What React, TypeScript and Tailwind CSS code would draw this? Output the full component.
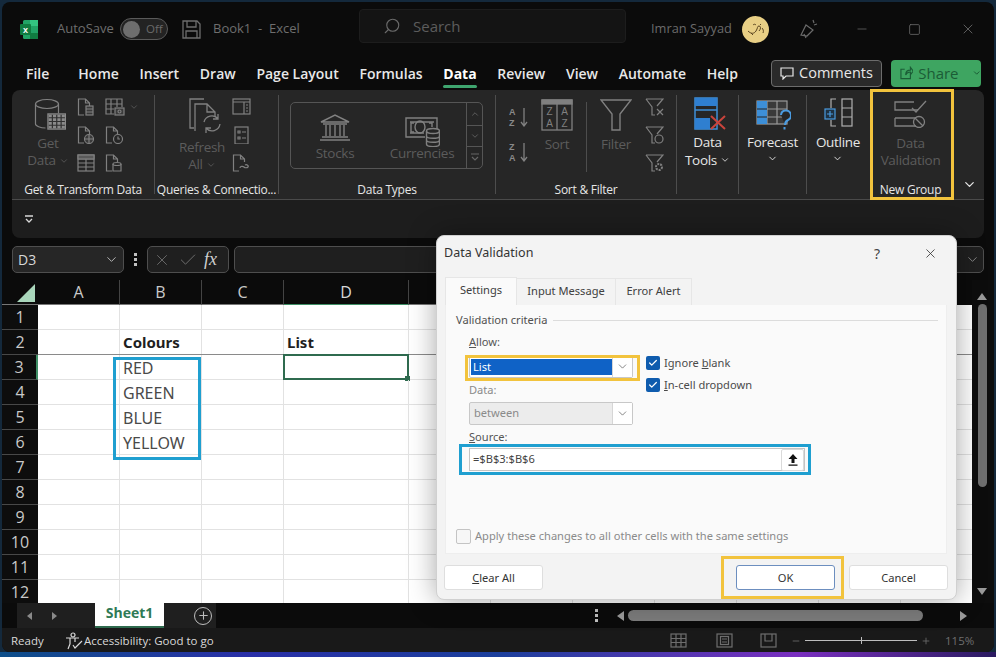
import React from "react";
import { ChevronDown, ChevronUp, X, Check, Search, Minus, Plus, Square } from "lucide-react";

const D = "#808080";
const Doc = ({ children, w = 18, h = 18 }: { children?: React.ReactNode; w?: number; h?: number }) => (
  <svg width={w} height={h} viewBox="0 0 18 18" fill="none" stroke={D} strokeWidth="1.200">
    <path d="M7 17H1.500V1h7l4 4v3M8.500 1v4h4" />
    {children}
  </svg>
);
const TableIcon = ({ x, y, w, h, c = 3, r = 3, color = D }: { x: number; y: number; w: number; h: number; c?: number; r?: number; color?: string }) => {
  const v = Array.from({ length: c - 1 }, (_, i) => x + ((i + 1) * w) / c);
  const hz = Array.from({ length: r - 1 }, (_, i) => y + ((i + 1) * h) / r);
  return (
    <g stroke={color} fill="none">
      <rect x={x} y={y} width={w} height={h} />
      {v.map((p) => <path key={p} d={`M${p} ${y}v${h}`} />)}
      {hz.map((p) => <path key={p} d={`M${x} ${p}h${w}`} />)}
    </g>
  );
};
const GetDataIcon = () => (
  <svg width="32" height="32" viewBox="0 0 32 32" fill="none" stroke={D} strokeWidth="1.200">
    <ellipse cx="13" cy="6" rx="11.500" ry="4.500" />
    <path d="M1.500 6v20c0 2 5 4 10 4M24.500 6v10" />
    <rect x="14" y="16" width="17.500" height="15" fill="#8a8a8a" />
    <TableIcon x={14} y={16} w={17.5} h={15} c={4} r={4} color="#303030" />
    <rect x="14" y="16" width="17.500" height="15" stroke="#8a8a8a" />
  </svg>
);
const RefreshIcon = () => (
  <svg width="33" height="36" viewBox="0 0 33 36" fill="none" stroke={D} strokeWidth="1.300">
    <path d="M5 30H1V1h14M6 33V6h12l8 8v5M18 6v8h8" />
    <path d="M15 24a8 8 0 0 1 14-3M31 26a8 8 0 0 1-14 4M29 16v5h-5M17 35v-5h5" />
  </svg>
);
const StocksIcon = () => (
  <svg width="32" height="28" viewBox="0 0 32 28" fill="none" stroke={D} strokeWidth="1.400">
    <path d="M2 9 16 2l14 7zM4 11h24M3 24h26M1 27h30M7 12v11M11 12v11M16 12v11M21 12v11M25 12v11" />
  </svg>
);
const CurrencyIcon = () => (
  <svg width="35" height="31" viewBox="0 0 35 31" fill="none" stroke={D} strokeWidth="1.400">
    <path d="M20 21H1V2h31v12M5 6h24M5 17h14" />
    <path d="M9 7H6v9h3M24 7h3v4" />
    <ellipse cx="15" cy="11" rx="5" ry="6" />
    <ellipse cx="28" cy="15" rx="6.500" ry="2.500" fill="#262626" />
    <path d="M21.500 15v13c0 3.500 13 3.500 13 0V15M21.500 20c0 3 13 3 13 0M21.500 24c0 3 13 3 13 0" />
  </svg>
);
const SortAZ = ({ flip = false }: { flip?: boolean }) => (
  <div className="h-[22px] w-[19px] flex">
    <div className="flex flex-col w-[11px] text-[9px] leading-[11px] font-bold font-['Liberation_Sans',sans-serif] text-[#8a8a8a]">
      <span>{flip ? "Z" : "A"}</span>
      <span>{flip ? "A" : "Z"}</span>
    </div>
    <svg width="8" height="20" viewBox="0 0 8 20" fill="none" stroke={D} strokeWidth="1.300"><path d="M4 1v18M1 15l3 4 3-4" /></svg>
  </div>
);
const SortIcon = () => (
  <svg width="32" height="32" viewBox="0 0 32 32" fill="none" stroke={D} strokeWidth="1.300">
    <rect x="1" y="1" width="30" height="30" />
    <rect x="1" y="1" width="30" height="4" fill={D} />
    <path d="M16 5v26" />
    <text x="8.500" y="16" fontSize="10" textAnchor="middle" fill={D} stroke="none" fontFamily="Liberation Sans">Z</text>
    <text x="8.500" y="28" fontSize="10" textAnchor="middle" fill={D} stroke="none" fontFamily="Liberation Sans">A</text>
    <text x="23.500" y="16" fontSize="10" textAnchor="middle" fill={D} stroke="none" fontFamily="Liberation Sans">A</text>
    <text x="23.500" y="28" fontSize="10" textAnchor="middle" fill={D} stroke="none" fontFamily="Liberation Sans">Z</text>
  </svg>
);
const FunnelIcon = () => (
  <svg width="32" height="32" viewBox="0 0 32 32" fill="none" stroke={D} strokeWidth="1.400">
    <path d="M1 1h30L20 15v16h-8V15z" />
  </svg>
);
const SmallFunnel = ({ children }: { children?: React.ReactNode }) => (
  <svg width="19" height="18" viewBox="0 0 19 18" fill="none" stroke={D} strokeWidth="1.200">
    <path d="M1 1h17l-6 7M1 1l6 8v8h3" />
    {children}
  </svg>
);
const DataToolsIcon = () => (
  <svg width="33" height="33" viewBox="0 0 33 33" fill="none">
    <rect x="1" y="1" width="22" height="31" fill="#262626" stroke="#3f8fd6" strokeWidth="1.500" />
    <rect x="1" y="1" width="22" height="8" fill="#2f7fd0" />
    <path d="M1 13h22" stroke="#3f8fd6" strokeWidth="1.500" />
    <rect x="1" y="21" width="15" height="11" fill="#2f7fd0" />
    <path d="M17 19l14 13M31 19 17 32" stroke="#c9443c" strokeWidth="2" />
  </svg>
);
const ForecastIcon = () => (
  <svg width="35" height="30" viewBox="0 0 35 30" fill="none">
    <rect x="1" y="1" width="30" height="23" stroke="#9a9a9a" strokeWidth="1.200" fill="#3a3a3a" />
    <path d="M11 1v23M21 1v23M1 9h30M1 17h30" stroke="#9a9a9a" strokeWidth="1.200" />
    <rect x="1" y="1" width="10" height="23" fill="#3d8fd8" />
    <path d="M1 9h10M1 17h10" stroke="#262626" strokeWidth="1.200" />
    <path d="M25 15a5 5 0 1 1 7 5c-2 1-3 3-3 5M28.500 27v2.500" stroke="#4a9be0" strokeWidth="2" fill="#262626" />
  </svg>
);
const OutlineIcon = () => (
  <svg width="29" height="29" viewBox="0 0 29 29" fill="none" stroke="#b0b0b0" strokeWidth="1.200">
    <rect x="1" y="11" width="10" height="10" stroke="#4a9be0" fill="#1f3344" />
    <path d="M6 13v6M3 16h6" stroke="#4a9be0" />
    <path d="M12 1H7v9M7 22v6h5" />
    <rect x="18" y="1" width="10" height="27" />
    <path d="M18 10h10M18 19h10" />
  </svg>
);
const ValidationIcon = () => (
  <svg width="33" height="28" viewBox="0 0 33 28" fill="none" stroke={D} strokeWidth="1.300">
    <path d="M24 10H1V2h19M1 18h21M1 18v8h21" />
    <path d="M18 8l4 4 10-11" />
    <circle cx="25" cy="22" r="5.500" />
    <path d="M21 18l8 8" />
  </svg>
);
const Big = ({ icon, lines, dim = false, cls = "" }: { icon: React.ReactNode; lines: React.ReactNode[]; dim?: boolean; cls?: string }) => (
  <div className={`flex flex-col items-center ${cls}`}>
    {icon}
    <div className={`flex flex-col items-center text-[13.5px] tracking-[-0.3px] ${dim ? "text-[#5c5c5c]" : "text-[#e6e6e6]"}`}>
      {lines.map((l, i) => <div key={i} className={`flex items-center whitespace-nowrap ${dim ? "h-[17px]" : "h-[18px]"}`}>{l}</div>)}
    </div>
  </div>
);
const Group = ({ w, label, children, cls = "" }: { w: number; label: string; children: React.ReactNode; cls?: string }) => (
  <div className="flex flex-col h-full shrink-0" style={{ width: w }}>
    <div className={`h-[91px] flex ${cls}`}>{children}</div>
    <div className="h-[18px] flex items-center justify-center text-[12px] tracking-[-0.25px] text-[#e6e6e6] whitespace-nowrap">{label}</div>
  </div>
);
const Sep = () => <div className="w-px my-[5px] bg-[#4d4d4d] shrink-0" />;
const Chev = ({ c = "#5c5c5c", s = 10 }: { c?: string; s?: number }) => <ChevronDown size={s} color={c} strokeWidth={2} className="ml-[3px]" />;
const DimLabel = ({ children, cls = "" }: { children: React.ReactNode; cls?: string }) => (
  <span className={`text-[13.5px] tracking-[-0.3px] text-[#5c5c5c] leading-[18px] whitespace-nowrap ${cls}`}>{children}</span>
);

const Ribbon = () => (
  <div className="mx-[10px] h-[110px] shrink-0 bg-[#262626] rounded-t-[8px] border-b border-[#4a4a4a] flex">
    <Group w={142} label="Get & Transform Data">
      <div className="ml-[15px] w-[42px] pt-[8px]">
        <Big cls="w-full" dim icon={<div className="h-[37px] ml-[4px]"><GetDataIcon /></div>} lines={["Get", <>Data<Chev /></>]} />
      </div>
      <div className="ml-[8px] mt-[8px] grid grid-cols-[18px_18px] gap-[10px] h-fit">
        <Doc><rect x="9" y="8" width="7" height="9" fill="#3a3a3a" /><path d="M9 11h7M9 14h7" /></Doc>
        <svg width="20" height="18" viewBox="0 0 20 18" fill="none" stroke={D} strokeWidth="1.200"><path d="M9 16H1V1h16v8M1 6h16M1 11h8M6 1v15M12 1v8" /><rect x="10" y="10" width="9" height="7" fill="#3a3a3a" /><circle cx="14.500" cy="13.500" r="1.500" /></svg>
        <Doc><circle cx="12" cy="13" r="4.500" fill="#3a3a3a" /><path d="M7.500 13h9M12 8.500v9" /></Doc>
        <Doc><circle cx="13" cy="13" r="4.500" fill="#262626" /><path d="M13 10.500V13h2" /></Doc>
        <svg width="18" height="18" viewBox="0 0 18 18" fill="none" stroke={D} strokeWidth="1.200"><rect x="1" y="1" width="16" height="16" /><path d="M1 5h16M1 9h16M1 13h16M9 5v12" /><rect x="1" y="1" width="16" height="4" fill="#5a5a5a" /></svg>
        <Doc><ellipse cx="12" cy="10" rx="4" ry="1.500" fill="#262626" /><path d="M8 10v7h8v-7" /></Doc>
      </div>
      <ChevronDown size={10} color="#5c5c5c" strokeWidth={2} className="ml-[6px] mt-[12px]" />
    </Group>
    <Sep />
    <Group w={123} label="Queries & Connectio...">
      <div className="ml-[21px] w-[52px] pt-[8px]">
        <Big cls="w-full" dim icon={<div className="ml-[6px] h-[41px]"><RefreshIcon /></div>} lines={["Refresh", <>All<Chev /></>]} />
      </div>
      <div className="ml-[4px] mt-[8px] flex flex-col gap-[10px]">
        <svg width="19" height="18" viewBox="0 0 19 18" fill="none" stroke={D} strokeWidth="1.200"><rect x="1" y="1" width="17" height="15" /><path d="M1 4h17M12 4v12M14 7h2M14 10h2M14 13h2" /></svg>
        <svg width="19" height="18" viewBox="0 0 19 18" fill="none" stroke={D} strokeWidth="1.200"><rect x="3" y="1" width="13" height="17" /><path d="M6 5h2v2H6zM10 6h4M6 11h2v2H6zM10 12h4" /></svg>
        <Doc><path d="M8 14c0-2 3-2 4-1s3 1 4 0-1-3-3-2" /></Doc>
      </div>
    </Group>
    <Sep />
    <Group w={216} label="Data Types">
      <div className="ml-[11px] mt-[12px] w-[193px] h-[67px] rounded-[5px] border border-[#555] flex">
        <div className="flex-1 flex">
          <div className="ml-[9px] w-[70px] flex flex-col items-center pt-[10px]">
            <StocksIcon />
            <DimLabel cls="mt-[3px]">Stocks</DimLabel>
          </div>
          <div className="ml-[21px] w-[62px] flex flex-col items-center pt-[13px]">
            <CurrencyIcon />
            <DimLabel cls="mt-[-3px]">Currencies</DimLabel>
          </div>
        </div>
        <div className="w-[16px] border-l border-[#555] flex flex-col">
          <div className="h-[23px] border-b border-[#555] flex items-center justify-center"><ChevronUp size={10} color="#666" strokeWidth={2} /></div>
          <div className="h-[21px] border-b border-[#555] flex items-center justify-center"><ChevronDown size={10} color="#666" strokeWidth={2} /></div>
          <div className="flex-1 flex flex-col items-center justify-center">
            <svg width="10" height="9" viewBox="0 0 10 9" fill="none" stroke="#666" strokeWidth="1.200"><path d="M1 1h8M2 4l3 3 3-3" /></svg>
          </div>
        </div>
      </div>
    </Group>
    <Sep />
    <Group w={180} label="Sort & Filter">
      <div className="ml-[13px] pt-[17px] flex flex-col gap-[13px] w-[19px]">
        <SortAZ />
        <SortAZ flip />
      </div>
      <div className="ml-[13px] w-[32px] pt-[9px] flex flex-col items-center">
        <SortIcon />
        <DimLabel cls="mt-[4px]">Sort</DimLabel>
      </div>
      <div className="ml-[13px] mt-[12px] w-px h-[70px] bg-[#4d4d4d]" />
      <div className="ml-[13px] w-[32px] pt-[9px] flex flex-col items-center">
        <FunnelIcon />
        <DimLabel cls="mt-[4px]">Filter</DimLabel>
      </div>
      <div className="ml-[13px] mt-[8px] flex flex-col gap-[10px]">
        <SmallFunnel><path d="M12 11l6 6M18 11l-6 6" /></SmallFunnel>
        <SmallFunnel><circle cx="14" cy="13" r="4" /></SmallFunnel>
        <SmallFunnel><circle cx="14" cy="13" r="3" strokeDasharray="2 1" strokeWidth="2" /></SmallFunnel>
      </div>
    </Group>
    <Sep />
    <Group w={61} label="">
      <Big cls="w-full pt-[7px]" icon={<div className="h-[36px] ml-[6px]"><DataToolsIcon /></div>} lines={["Data", <>Tools<Chev c="#e6e6e6" /></>]} />
    </Group>
    <Sep />
    <Group w={67} label="">
      <Big cls="w-full pt-[10px]" icon={<div className="h-[33px] ml-[2px]"><ForecastIcon /></div>} lines={["Forecast", <ChevronDown size={11} color="#e6e6e6" strokeWidth={2} className="-mt-[3px]" />]} />
    </Group>
    <Sep />
    <Group w={62} label="">
      <Big cls="w-full pt-[8px]" icon={<div className="h-[35px]"><OutlineIcon /></div>} lines={["Outline", <ChevronDown size={11} color="#e6e6e6" strokeWidth={2} className="-mt-[3px]" />]} />
    </Group>
    <Group w={83} label="New Group">
      <div className="w-full pt-[10px] flex flex-col items-center">
        <div className="h-[35px]"><ValidationIcon /></div>
        <div className="text-[13.5px] tracking-[-0.3px] leading-[17px] text-[#5c5c5c] text-center">Data<br />Validation</div>
      </div>
    </Group>
    <div className="flex-1 flex items-end justify-center pb-[7px] pl-[2px]">
      <ChevronDown size={15} color="#e6e6e6" strokeWidth={2} />
    </div>
  </div>
);

const COLS = [82, 82, 82, 125, 82, 82, 82, 82, 82, 82];
const cellText: Record<string, { t: string; bold?: boolean }> = {
  "2-1": { t: "Colours", bold: true },
  "2-3": { t: "List", bold: true },
  "3-1": { t: "RED" },
  "4-1": { t: "GREEN" },
  "5-1": { t: "BLUE" },
  "6-1": { t: "YELLOW" },
};

const Grid = () => (
  <div className="w-[970px] shrink-0 h-[323px] overflow-hidden bg-white">
    <div className="flex h-[25px] bg-[#0b0b0b]">
      <div className="w-[36px] shrink-0 flex items-end justify-end pr-[3px] pb-[2px] border-b border-[#777]">
        <div className="w-0 h-0 border-l-[18px] border-l-transparent border-b-[18px] border-b-[#a9d6bb]" />
      </div>
      {["A", "B", "C", "D", "E"].map((c, i) => (
        <div key={c} style={{ width: COLS[i] }} className={`shrink-0 flex items-center justify-center text-[16px] text-[#c9c9c9] border-r border-[#444] border-b ${c === "D" ? "border-b-[#3f8f66] text-[#d8d8d8]" : "border-b-[#777]"}`}>{c}</div>
      ))}
    </div>
    {Array.from({ length: 12 }, (_, i) => i + 1).map((r) => (
      <div key={r} className={`flex h-[25px] ${r === 2 ? "border-b border-[#8a8a8a]" : "border-b border-[#e2e2e2]"}`}>
        <div className={`w-[36px] shrink-0 bg-[#0d0d0d] flex items-center justify-center text-[16px] text-[#c9c9c9] border-b border-[#484848] -mb-px ${r === 3 ? "border-r-2 border-r-[#3f8f66]" : ""}`}>{r}</div>
        {COLS.map((w, c) => {
          const cell = cellText[`${r}-${c}`];
          return (
            <div key={c} style={{ width: w }} className={`shrink-0 relative border-r border-[#e2e2e2] pl-[3px] pt-[1px] flex items-center whitespace-nowrap font-['Noto_Sans',sans-serif] ${cell?.bold ? "text-[15px] font-bold text-[#1f1f1f]" : "text-[16px] text-[#4a4a4a]"}`}>
              {cell?.t}
              {r === 3 && c === 3 && (
                <div className="absolute -left-px -top-px -right-px -bottom-px border-2 border-[#2f6b4f]">
                  <div className="absolute -right-[3px] -bottom-[3px] w-[5px] h-[5px] bg-[#2f6b4f]" />
                </div>
              )}
            </div>
          );
        })}
      </div>
    ))}
  </div>
);

const Combo = ({ children, cls = "" }: { children: React.ReactNode; cls?: string }) => (
  <div className={`h-[23px] w-[164px] border border-[#c8c8c8] flex rounded-[2px] ${cls}`}>
    <div className="flex-1 flex items-center pl-[1px] min-w-0">{children}</div>
    <div className="w-[20px] bg-white border-l border-[#d6d6d6] flex items-center justify-center"><ChevronDown size={13} color="#555" strokeWidth={1.300} /></div>
  </div>
);
const CheckBox = ({ label }: { label: React.ReactNode }) => (
  <div className="flex items-center h-[14px] gap-[4px]">
    <div className="w-[14px] h-[14px] rounded-[2px] bg-[#0f5cae] flex items-center justify-center"><Check size={10} color="#fff" strokeWidth={3} /></div>
    <span className="text-[#4a4a4a] whitespace-nowrap">{label}</span>
  </div>
);
const DBtn = ({ children, ok = false, cls = "" }: { children: React.ReactNode; ok?: boolean; cls?: string }) => (
  <div className={`w-[99px] h-[25px] rounded-[3px] bg-white border flex items-center justify-center pt-[1px] text-[#333] ${ok ? "border-[#6c8ebf]" : "border-[#dedede]"} ${cls}`}>{children}</div>
);

const Dialog = () => (
  <div className="absolute left-[436px] top-[235px] w-[521px] h-[365px] rounded-[8px] bg-[#f3f3f3] border border-[#d0d0d0] shadow-[0_0_28px_rgba(0,0,0,0.35)] flex flex-col text-[11.1px] text-[#404040] font-['Noto_Sans',sans-serif]">
    <div className="h-[41px] flex items-center pl-[7px] pb-[7px] shrink-0">
      <span className="text-[12.5px] text-[#333]">Data Validation</span>
      <span className="ml-auto text-[14px] text-[#444]">?</span>
      <X size={15} color="#333" strokeWidth={1.300} className="ml-[43px] mr-[18px]" />
    </div>
    <div className="h-[28px] pl-[8px] flex shrink-0 items-end">
      <div className="w-[72px] h-[28px] bg-[#fafafa] border border-b-0 border-[#e6e6e6] flex items-center justify-center pb-[3px] text-[#404040]">Settings</div>
      <div className="w-[99px] h-[27px] bg-[#f3f3f3] border-r border-t border-[#e6e6e6] flex items-center justify-center pb-[1px]">Input Message</div>
      <div className="w-[76px] h-[27px] bg-[#f3f3f3] border-r border-t border-[#e6e6e6] flex items-center justify-center pb-[1px]">Error Alert</div>
    </div>
    <div className="ml-[8px] mr-[9px] h-[249px] bg-[#fafafa] border border-t-0 border-[#eeeeee] pl-[10px] pr-[8px] pt-[8px] shrink-0">
      <div className="h-[14px] flex items-center gap-[6px]">
        <span className="whitespace-nowrap text-[#505050]">Validation criteria</span>
        <div className="flex-1 h-px bg-[#dcdcdc]" />
      </div>
      <div className="ml-[13px] flex">
        <div className="w-[164px]">
          <div className="mt-[8px] h-[14px] flex items-center text-[#555]"><span><u>A</u>llow:</span></div>
          <Combo cls="mt-[6px] bg-white">
            <div className="w-full h-[16px] bg-[#0f62c6] text-white leading-[16px] pl-[2px]">List</div>
          </Combo>
          <div className="mt-[5px] h-[14px] flex items-center text-[#8a8a8a]">Data:</div>
          <Combo cls="mt-[5px] bg-[#ececec]">
            <span className="text-[#8a8a8a] pl-[3px]">between</span>
          </Combo>
        </div>
        <div className="ml-[13px] pt-[29px] flex flex-col gap-[8px]">
          <CheckBox label={<>Ignore <u>b</u>lank</>} />
          <CheckBox label={<><u>I</u>n-cell dropdown</>} />
        </div>
      </div>
      <div className="ml-[13px] mt-[5px] h-[14px] flex items-center text-[#555]"><span><u>S</u>ource:</span></div>
      <div className="ml-[13px] mt-[4px] w-[336px] h-[23px] bg-white border border-[#c4c4c4] flex items-center justify-between pl-[3px]">
        <span className="text-[#444]">=$B$3:$B$6</span>
        <div className="w-[23px] h-[22px] border border-[#dadada] rounded-[2px] flex items-center justify-center">
          <svg width="12" height="13" viewBox="0 0 12 13" fill="#111"><path d="M6 1 1.500 6H4.500v4h3V6h3zM1.500 11.500h9v1.200h-9z" /></svg>
        </div>
      </div>
      <div className="mt-[57px] flex items-center gap-[4px]">
        <div className="w-[15px] h-[15px] border border-[#c4c4c4] rounded-[2px] bg-[#f7f7f7]" />
        <span className="text-[#8a8a8a] whitespace-nowrap">Apply these changes to all other cells with the same settings</span>
      </div>
    </div>
    <div className="flex pl-[7px] pr-[8px] pt-[11px]">
      <DBtn><span><u>C</u>lear All</span></DBtn>
      <DBtn ok cls="ml-auto">OK</DBtn>
      <DBtn cls="ml-[14px]">Cancel</DBtn>
    </div>
  </div>
);

const Hl = ({ cls }: { cls: string }) => <div className={`absolute border-[3px] pointer-events-none ${cls}`} />;

export default function App() {
  return (
    <div className="relative w-[996px] h-[657px] overflow-hidden bg-[linear-gradient(90deg,#0d4f8a_0%,#2a2fa8_25%,#1b3f9c_50%,#7a2fc0_80%,#2a1a60_100%)] font-['Open_Sans',sans-serif]">
      <div className="absolute left-0 top-0 w-[996px] h-[652px] bg-[#14293c]" />
      <div className="absolute left-[2px] top-[2px] w-[992px] h-[650px] bg-[#0b0b0b] rounded-[8px] flex flex-col overflow-hidden">
        {/* title bar */}
        <div className="h-[54px] flex items-center shrink-0 pl-[18px] text-[#6e6e6e]">
          <svg width="18" height="19" viewBox="0 0 18 19" className="shrink-0">
            <rect x="3" y="0" width="15" height="19" rx="1.500" fill="#21a366" />
            <rect x="10" y="0" width="8" height="6" fill="#33c481" />
            <rect x="10" y="13" width="8" height="6" fill="#107c41" />
            <rect x="0" y="4" width="11" height="11" rx="1" fill="#107c41" />
            <text x="5.500" y="12.500" fontSize="9" fontWeight="700" textAnchor="middle" fill="#fff" fontFamily="Liberation Sans">x</text>
          </svg>
          <span className="ml-[19px] w-[56px] shrink-0 text-[13px]">AutoSave</span>
          <div className="ml-[7px] w-[48px] h-[22px] rounded-full border border-[#5a5a5a] bg-[#232323] flex items-center pl-[2px] shrink-0">
            <div className="w-[17px] h-[17px] rounded-full bg-[#6e6e6e]" />
            <span className="ml-[6px] text-[11.5px] text-[#6a6a6a]">Off</span>
          </div>
          <svg width="19" height="19" viewBox="0 0 19 19" fill="none" stroke="#6e6e6e" strokeWidth="1.300" className="ml-[14px] shrink-0">
            <path d="M1 1h14l3 3v14H1zM5 1v6h9V1M4 18v-7h11v7" />
          </svg>
          <span className="ml-[12px] w-[87px] shrink-0 text-[13px] whitespace-nowrap">Book1&nbsp; -&nbsp; Excel</span>
          <div className="ml-[59px] w-[267px] h-[34px] shrink-0 rounded-[4px] bg-[#141414] border border-[#1d1d1d] flex items-center pl-[23px] -mt-[6px]">
            <Search size={18} color="#6a6a6a" strokeWidth={1.500} className="-scale-x-100" />
            <span className="ml-[12px] text-[15px] text-[#5c5c5c]">Search</span>
          </div>
          <span className="ml-[25px] w-[79px] shrink-0 text-[12.8px] text-[#6a6a6a] whitespace-nowrap">Imran Sayyad</span>
          <div className="ml-[12px] w-[27px] h-[27px] rounded-full bg-[#e8cf85] flex items-center justify-center shrink-0">
            <svg width="18" height="14" viewBox="0 0 18 14" fill="none" stroke="#5a4520" strokeWidth="1"><path d="M1 9c3 3 6 3 8 0s1-5 3-5 2 3 0 5M6 3c1-1 2-1 3 0M13 2l1 1M15 6c1 1 2 3 1 5M4 11l2 2" /></svg>
          </div>
          <svg width="19" height="20" viewBox="0 0 19 20" fill="none" stroke="#6a6a6a" strokeWidth="1.200" className="ml-[31px] shrink-0">
            <path d="M6 6l7 5-6 6-6-1zM13 1l1 3M17 5l-3 1M4 15l2 4" />
          </svg>
          <Minus size={14} color="#6a6a6a" strokeWidth={1.300} className="ml-[36px] shrink-0" />
          <Square size={13} color="#6a6a6a" strokeWidth={1.500} className="ml-[39px] shrink-0" />
          <X size={16} color="#6a6a6a" strokeWidth={1.300} className="ml-[39px] shrink-0" />
        </div>
        {/* tabs */}
        <div className="h-[34px] shrink-0 flex items-center pl-[24px] pr-[13px] text-[14px] font-semibold text-[#e8e8e8]">
          <span className="mr-[29px]">File</span>
          <div className="flex gap-[20.7px]">
            {["Home", "Insert", "Draw", "Page Layout", "Formulas"].map((t) => <span key={t} className="whitespace-nowrap">{t}</span>)}
            <span className="relative text-white font-bold">Data<span className="absolute left-0 right-0 -bottom-[4px] h-[3px] rounded bg-[#3fa56f]" /></span>
            {["Review", "View", "Automate", "Help"].map((t) => <span key={t} className="whitespace-nowrap">{t}</span>)}
          </div>
          <div className="ml-auto w-[111px] h-[27px] rounded-[4px] bg-[#2a2a2a] border border-[#6c6c6c] flex items-center justify-center gap-[5px] font-normal text-[14.5px]">
            <svg width="14" height="13" viewBox="0 0 14 13" fill="none" stroke="#e8e8e8" strokeWidth="1.200"><path d="M1 1h12v8H6l-3 3V9H1z" /></svg>
            <span>Comments</span>
          </div>
          <div className="ml-[9px] w-[90px] h-[27px] rounded-[4px] bg-[#3ea561] flex items-center pl-[9px] font-normal text-[15px] text-[#1b5c36]">
            <svg width="14" height="14" viewBox="0 0 14 14" fill="none" stroke="#1b5c36" strokeWidth="1.200"><path d="M5 3H1v10h10V9M6 9c0-3 2-5 5-5V1l3 4-3 4V6c-2 0-4 1-5 3z" /></svg>
            <span className="ml-[5px]">Share</span>
            <ChevronDown size={10} color="#1b5c36" strokeWidth={2.500} className="ml-[13px]" />
          </div>
        </div>
        <Ribbon />
        <div className="mx-[10px] h-[38px] shrink-0 bg-[#1d1d1d] rounded-b-[8px] flex items-center pl-[12px]">
          <svg width="10" height="9" viewBox="0 0 10 9" fill="none" stroke="#d8d8d8" strokeWidth="1.300"><path d="M1 1h8M2 4l3 3 3-3" /></svg>
        </div>
        {/* formula bar */}
        <div className="mt-[8px] mx-[10px] h-[27px] shrink-0 flex items-stretch">
          <div className="w-[112px] rounded-[5px] bg-[#262626] border border-[#4e4e4e] flex items-center justify-between pl-[5px] pr-[4px] text-[#d8d8d8] text-[14px]">
            <span>D3</span>
            <ChevronDown size={15} color="#bdbdbd" strokeWidth={1.500} />
          </div>
          <div className="w-[23px] flex flex-col items-center justify-center gap-[2px]">
            <div className="w-[3px] h-[3px] bg-[#c0c0c0]" /><div className="w-[3px] h-[3px] bg-[#c0c0c0]" /><div className="w-[3px] h-[3px] bg-[#c0c0c0]" />
          </div>
          <div className="w-[82px] rounded-[5px] bg-[#1f1f1f] border border-[#4e4e4e] flex items-center pl-[5px]">
            <X size={18} color="#6e6e6e" strokeWidth={1.200} />
            <Check size={20} color="#6e6e6e" strokeWidth={1.200} className="ml-[7px]" />
            <span className="ml-[6px] text-[18px] italic font-['Liberation_Serif',serif] text-[#d0d0d0]">fx</span>
          </div>
          <div className="ml-[5px] flex-1 rounded-[5px] bg-[#1f1f1f] border border-[#4e4e4e] flex items-center justify-end pr-[3px]">
            <ChevronDown size={15} color="#8a8a8a" strokeWidth={1.500} />
          </div>
        </div>
        {/* grid + v scroll */}
        <div className="mt-[7px] flex h-[323px] shrink-0">
          <Grid />
          <div className="flex-1 bg-[#0d0d0d] flex flex-col items-center pt-[13px] pb-[2px] pr-[2px]">
            <div className="w-0 h-0 border-x-[5px] border-x-transparent border-b-[7px] border-b-[#9a9a9a]" />
            <div className="mt-[4px] w-[9px] h-[183px] rounded-full bg-[#6f6f6f]" />
            <div className="mt-auto mb-[6px] w-0 h-0 border-x-[5px] border-x-transparent border-t-[7px] border-t-[#9a9a9a]" />
          </div>
        </div>
        {/* sheet tabs */}
        <div className="h-[25px] shrink-0 flex items-stretch">
          <div className="ml-[15px] w-[78px] bg-[#1f1f1f] flex items-center pl-[10px] gap-[20px]">
            <div className="w-0 h-0 border-y-[4px] border-y-transparent border-r-[5px] border-r-[#8a8a8a]" />
            <div className="w-0 h-0 border-y-[4px] border-y-transparent border-l-[5px] border-l-[#8a8a8a]" />
          </div>
          <div className="w-[69px] bg-white border-b-2 border-[#2f6b4f] flex items-center justify-center pb-[4px] text-[14px] font-bold text-[#2f7a55]">Sheet1</div>
          <div className="w-[52px] bg-[#1f1f1f] flex items-center justify-end pr-[4px]">
            <div className="w-[18px] h-[18px] rounded-full border-[1.5px] border-[#bdbdbd] flex items-center justify-center"><Plus size={13} color="#bdbdbd" strokeWidth={2} /></div>
          </div>
          <div className="ml-[378px] w-[5px] flex flex-col items-center justify-center gap-[2px]">
            <div className="w-[3px] h-[3px] bg-[#c0c0c0]" /><div className="w-[3px] h-[3px] bg-[#c0c0c0]" /><div className="w-[3px] h-[3px] bg-[#c0c0c0]" />
          </div>
          <div className="ml-[18px] flex items-center w-[350px]">
            <div className="w-0 h-0 border-y-[5px] border-y-transparent border-r-[7px] border-r-[#9a9a9a]" />
            <div className="ml-[4px] w-[295px] h-[11px] rounded-full bg-[#7b7b7b]" />
            <div className="ml-auto w-0 h-0 border-y-[5px] border-y-transparent border-l-[7px] border-l-[#9a9a9a]" />
          </div>
        </div>
        {/* status */}
        <div className="h-[24px] shrink-0 bg-[#191919] flex items-center pl-[9px] pt-[1px] text-[11.5px] text-[#d8d8d8]">
          <span className="w-[33px]">Ready</span>
          <svg width="18" height="18" viewBox="0 0 18 18" fill="none" stroke="#d8d8d8" strokeWidth="1.200" className="ml-[21px]">
            <circle cx="8" cy="3" r="2" /><path d="M1 6h13M5 6v6l-2 5M10 6v4M8 13l2 3 7-7" />
          </svg>
          <span className="ml-[1px] w-[128px] whitespace-nowrap">Accessibility: Good to go</span>
          <svg width="17" height="15" viewBox="0 0 17 15" fill="none" stroke="#6e6e6e" strokeWidth="1.200" className="ml-[458px]"><rect x="1" y="1" width="15" height="13" /><path d="M6 1v13M11 1v13M1 5.500h15M1 9.500h15" /></svg>
          <svg width="17" height="15" viewBox="0 0 17 15" fill="none" stroke="#6e6e6e" strokeWidth="1.200" className="ml-[29px]"><rect x="1" y="1" width="15" height="13" /><rect x="4.500" y="3.500" width="8" height="8" /><path d="M6 6h5M6 9h5" /></svg>
          <svg width="17" height="15" viewBox="0 0 17 15" fill="none" stroke="#6e6e6e" strokeWidth="1.200" className="ml-[27px]"><rect x="1" y="1" width="15" height="13" /><path d="M5 1v7h7V1" /></svg>
          <Minus size={10} color="#6e6e6e" className="ml-[14px]" />
          <div className="ml-[4px] relative w-[112px] h-px bg-[#bdbdbd]">
            <div className="absolute left-[56px] -top-[3px] w-px h-[7px] bg-[#bdbdbd]" />
          </div>
          <Plus size={10} color="#6e6e6e" className="ml-[4px]" />
          <span className="ml-[14px] text-[#6e6e6e]">115%</span>
        </div>
      </div>
      <Dialog />
      <Hl cls="left-[870px] top-[89px] w-[84px] h-[111px] border-[#f2c33d]" />
      <Hl cls="left-[113px] top-[357px] w-[88px] h-[103px] border-[#1f9fd0]" />
      <Hl cls="left-[465px] top-[355px] w-[175px] h-[26px] border-[#f2c33d]" />
      <Hl cls="left-[459px] top-[444px] w-[352px] h-[31px] border-[#1f9fd0]" />
      <Hl cls="left-[721px] top-[556px] w-[123px] h-[43px] border-[#f2c33d]" />
    </div>
  );
}
